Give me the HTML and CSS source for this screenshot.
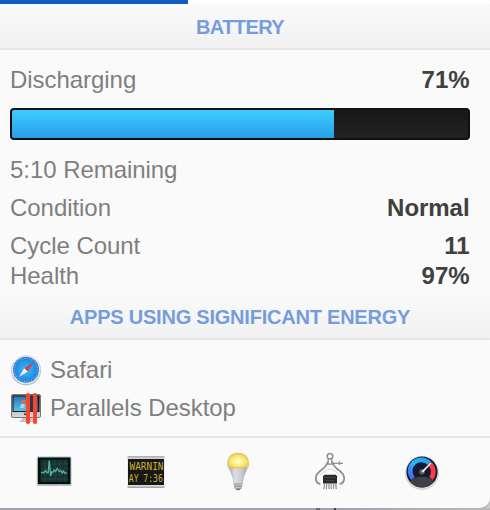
FILE: index.html
```html
<!DOCTYPE html>
<html lang="en">

<head>
  <meta charset="UTF-8">
  <meta name="viewport" content="width=device-width, initial-scale=1.0">
  <title>Battery</title>
  <link rel="stylesheet" href="styles.css">
</head>

<body>

  <div class="menu-strip"><div class="menu-selected"></div></div>

  <main class="panel">
    <!-- Battery -->
    <h2 class="title">BATTERY</h2>
    <section class="battery">
      <div class="row"><span>Discharging</span><b>71%</b></div>
      <div class="bar"><div class="bar-fill" style="width: 70.6%"></div></div>
      <div class="row spaced"><span>5:10 Remaining</span></div>
      <div class="row spaced"><span>Condition</span><b>Normal</b></div>
      <div class="row"><span>Cycle Count</span><b>11</b></div>
      <div class="row"><span>Health</span><b>97%</b></div>
    </section>

    <!-- Apps -->
    <h2 class="title apps-title">APPS USING SIGNIFICANT ENERGY</h2>
    <section class="apps">
      <div class="app">
        <svg width="32" height="32" viewBox="0 0 32 32">
          <defs>
            <radialGradient id="glow"><stop offset="0" stop-color="#35c5f3"/><stop offset="1" stop-color="#238be3"/></radialGradient>
          </defs>
          <circle cx="16" cy="16.5" r="15" fill="#b9b9b9"/>
          <circle cx="16" cy="15.8" r="14.4" fill="#e8e8e8"/>
          <circle cx="16" cy="15.8" r="13" fill="#2480dc"/>
          <circle cx="16" cy="15.8" r="11.6" fill="none" stroke="#7dbdf0" stroke-width="1.3" stroke-dasharray="1 1.4"/>
          <circle cx="16" cy="15.8" r="10.4" fill="url(#glow)"/>
          <path d="M23.5 8.5 14.2 14.2 17.7 17.6z" fill="#e9393b"/>
          <path d="M9 23 14.2 14.2 17.7 17.6z" fill="#f1f1ef"/>
        </svg>
        <span>Safari</span>
      </div>
      <div class="app">
        <svg width="32" height="32" viewBox="0 0 32 32">
          <defs>
            <linearGradient id="screen" x1="0" y1="0" x2="0" y2="1">
              <stop offset="0" stop-color="#2378bd"/>
              <stop offset="1" stop-color="#55c3ee"/>
            </linearGradient>
            <linearGradient id="monitor" x1="0" y1="0" x2="0" y2="1">
              <stop offset="0" stop-color="#777"/>
              <stop offset="1" stop-color="#ddd"/>
            </linearGradient>
          </defs>
          <path d="M12 25h10l1 3h2v2H10v-2h2z" fill="#c5c5c5"/>
          <rect x="1.5" y="2.5" width="29" height="23" rx="1.5" fill="url(#monitor)" stroke="#777"/>
          <rect x="2.5" y="3.5" width="27" height="16.5" fill="#141a20"/>
          <rect x="3.5" y="4.5" width="24" height="14.5" fill="url(#screen)"/>
          <path d="M11.5 8.5q2.5-2 4 0l-.6 3.4q-2-1.4-4 0z" fill="#ee6b38"/>
          <path d="M10.8 12.5q2-1.4 4 0l-.7 4q-2-1.5-4.5 0z" fill="#9bdcf5"/>
          <path d="M15.5 13h4l-1 4h-3z" fill="#f0cb42"/>
          <circle cx="15" cy="22.3" r="1" fill="#333"/>
          <rect x="20" y="4" width="3" height="16" fill="#263b48"/>
          <rect x="16" y="1" width="4" height="31" rx="1.8" fill="#fa4430"/>
          <rect x="23" y="1" width="4" height="31" rx="1.8" fill="#fa4430"/>
        </svg>
        <span>Parallels Desktop</span>
      </div>
    </section>

    <!-- Utilities -->
    <footer class="tools">
      <svg class="tool" width="40" height="40" viewBox="0 -1 40 40">
        <rect x="2.8" y="4.8" width="34.6" height="29" rx="1.5" fill="#a7aeb1"/>
        <rect x="3" y="4" width="34" height="1.5" fill="#c4dfeb"/>
        <rect x="4" y="5.5" width="32.4" height="26.5" fill="#070d0e"/>
        <rect x="6.4" y="7.5" width="27.8" height="22.5" fill="#16312e"/>
        <path d="M7 12h27M7 17h27M7 22h27M7 27h27M11 8v22M16 8v22M21 8v22M26 8v22M31 8v22" stroke="#295048" stroke-width=".6"/>
        <path d="M7 20.5h3l1.5-2 1.5 2h1.2l1-12 1.5 15.5 1-4h1.5l1-2 1.5 1.5 1.5-3 2 3 1.5-1 1.5 2.5 1-2 1.500 2h2" fill="none" stroke="#55b19e" stroke-width="1.3"/>
      </svg>

      <svg class="tool" width="40" height="40" viewBox="0 -1.5 40 40">
        <defs>
          <linearGradient id="metal" x1="0" y1="0" x2="0" y2="1"><stop offset="0" stop-color="#aaa"/><stop offset=".1" stop-color="#ddd"/><stop offset=".9" stop-color="#eee"/><stop offset="1" stop-color="#999"/></linearGradient>
        </defs>
        <rect x="1.4" y="3.5" width="37.2" height="32" rx="1" fill="url(#metal)"/>
        <rect x="2" y="6.5" width="36" height="26" fill="#15191a"/>
        <g class="led-text">
          <text x="3.5" y="17.5" textLength="34" lengthAdjust="spacingAndGlyphs">WARNIN</text>
          <text x="2.8" y="29.5" textLength="34" lengthAdjust="spacingAndGlyphs">AY 7:36</text>
        </g>
      </svg>

      <svg class="tool" width="40" height="40" viewBox="0 0 40 40">
        <defs>
          <radialGradient id="bulb" cx=".5" cy=".55"><stop offset="0" stop-color="#fffde6"/><stop offset=".5" stop-color="#fff08a"/><stop offset="1" stop-color="#f5d342"/></radialGradient>
          <linearGradient id="base"><stop offset="0" stop-color="#aaa"/><stop offset=".35" stop-color="#dedfe5"/><stop offset=".7" stop-color="#c8c9ce"/><stop offset="1" stop-color="#a3a3a8"/></linearGradient>
        </defs>
        <path d="M10.5 15h19.2q0 3-1.8 6-2 4-3.1 12h-9.2q-1.2-8-3.3-12-1.8-3-1.8-6z" fill="url(#base)"/>
        <path d="M9.9 16.2Q8 2.4 20.1 2.2 32.2 2.4 30.3 16.2q-10.2 1.7-20.4 0z" fill="url(#bulb)" stroke="#c3b47c" stroke-width=".7"/>
        <path d="M15.6 32.5h9l-.8 4.7q-3.8 3-7.4 0z" fill="#98989c"/>
        <path d="M16 34.5l8-1M16.3 37l7.5-1" stroke="#d0d0d0"/>
        <path d="M18.4 38.6h3.4" stroke="#666" stroke-width="1"/>
      </svg>

      <svg class="tool" width="40" height="40" viewBox="0 -.6 40 40">
        <g fill="none" stroke="#909090">
          <circle cx="20" cy="4.6" r="2.8" stroke-width="1.5"/>
          <path d="M18.2 7.3v5.5M21.8 7.3v5.5M17 12.5h6M22 11.7h11M29.500 10v3.500" stroke-width="1.3"/>
          <path d="M17.8 10q-1 4.500-6.500 8.500-5.500 4-5.500 8.500.2 4.500 4.600 5.500M22.2 10q1 4.500 6.500 8.500 5.500 4 5.500 8.500-.2 4.500-4.600 5.500" stroke-width="1.8"/>
          <path d="M10 23.500q4-4 10-6.500 6 2.500 10 6.500" stroke="#dadada"/>
        </g>
        <path d="M14.200 23.200h11.600l1.200 1.500V32H13v-7z" fill="#292929"/>
        <path d="M14.500 32l-.6 5.500M16.700 32l-.3 5.500M19 32v5.500M21.200 32v5.500M23.500 32l.3 5.500M25.700 32l.6 5.500" stroke="#858585" stroke-width="1.1"/>
        <path d="M14 26h12M16 29h8" stroke="#555" stroke-width=".7"/>
      </svg>

      <svg class="tool" width="40" height="40" viewBox="0 0 40 40">
        <defs>
          <linearGradient id="cool" x1="0" y1="1" x2="1" y2="0"><stop offset="0" stop-color="#4865ee"/><stop offset=".5" stop-color="#25b8f4"/><stop offset="1" stop-color="#269de7"/></linearGradient>
        </defs>
        <circle cx="20" cy="22" r="16.9" fill="#cfcfd1"/>
        <circle cx="20" cy="21.3" r="16.5" fill="#e4e4e7"/>
        <circle cx="20" cy="21" r="15.6" fill="#171a37"/>
        <path d="M11 27.5A10.800 10.800 0 0 1 27.5 12.5" fill="none" stroke="url(#cool)" stroke-width="4.600"/>
        <path d="M28 13A10.800 10.800 0 0 1 29 27.5" fill="none" stroke="#fa3d42" stroke-width="4.600"/>
        <path d="M8 30Q20 21 32 30 27 36.500 20 36.500T8 30z" fill="#404044"/>
        <circle cx="20" cy="20.7" r="4.800" fill="#15171d"/>
        <circle cx="20" cy="20.7" r="3" fill="#55575b"/>
        <path d="M19.4 20.5 28.5 11.5 29.4 12.300 20.900 21.700z" fill="#f5f5f6"/>
      </svg>
    </footer>
  </main>

  <div class="desktop"><div class="desktop-mark"></div></div>

</body>

</html>
```

FILE: styles.css
```css
/* General Reset */
* {
  margin: 0;
  padding: 0;
  box-sizing: border-box;
}

body {
  width: 490px;
  height: 510px;
  overflow: hidden;
  background-color: #d2d2d2;
  font-family: "Liberation Sans", Arial, sans-serif;
  color: #7f7f7f;
}

.menu-strip {
  height: 4px;
  background-color: #fff;
}

.menu-selected {
  width: 188px;
  height: 4px;
  background-color: #105cbe;
}

.panel {
  height: 504px;
  background-color: #fafafa;
  border-bottom-right-radius: 10px;
  overflow: hidden;
  box-shadow: 0 2px 2px #aaa;
}

/* Section titles */
.title {
  height: 46px;
  padding-right: 10px;
  border-bottom: 2px solid #e5e5e5;
  background: linear-gradient(#fafafa, #f1f1f1);
  color: #759ddd;
  font-size: 20px;
  line-height: 46px;
  letter-spacing: -0.6px;
  text-align: center;
}

.apps-title {
  letter-spacing: -0.22px;
}

/* Battery */
.battery {
  height: 244px;
  padding: 15px 20px 0 10px;
}

.row {
  height: 30px;
  display: flex;
  justify-content: space-between;
  font-size: 24px;
  line-height: 30px;
  letter-spacing: -0.05px;
}

.row b {
  margin-right: 0.5px;
  color: #404040;
}

.spaced {
  margin-bottom: 8px;
}

.bar {
  height: 32px;
  margin: 13px 0 15px;
  border: 2px solid #111;
  border-radius: 4px;
  background: linear-gradient(#181818, #232323);
  overflow: hidden;
}

.bar-fill {
  height: 100%;
  background: linear-gradient(#3dccff, #27a1e9);
}

/* Apps */
.apps {
  height: 96px;
  padding: 11px 10px 0;
}

.app {
  height: 38px;
  display: flex;
  align-items: center;
  gap: 8px;
  font-size: 24px;
  letter-spacing: -0.05px;
}

/* Utilities */
.tools {
  height: 72px;
  border-top: 2px solid #e5e5e5;
  padding: 13px 48px 0 34px;
  display: flex;
  justify-content: space-between;
}

.tool {
  display: block;
}

.led-text {
  fill: #d2ae31;
  font-family: "DejaVu Sans Mono", monospace;
  font-size: 10px;
}

.desktop {
  height: 2px;
  background: linear-gradient(90deg, #a2a2ac 70%, #b8b8b8);
}

.desktop-mark {
  width: 20px;
  height: 2px;
  margin-left: 316px;
  border-left: 4px solid #6a6a6a;
  border-right: 2px solid #444;
}
```
